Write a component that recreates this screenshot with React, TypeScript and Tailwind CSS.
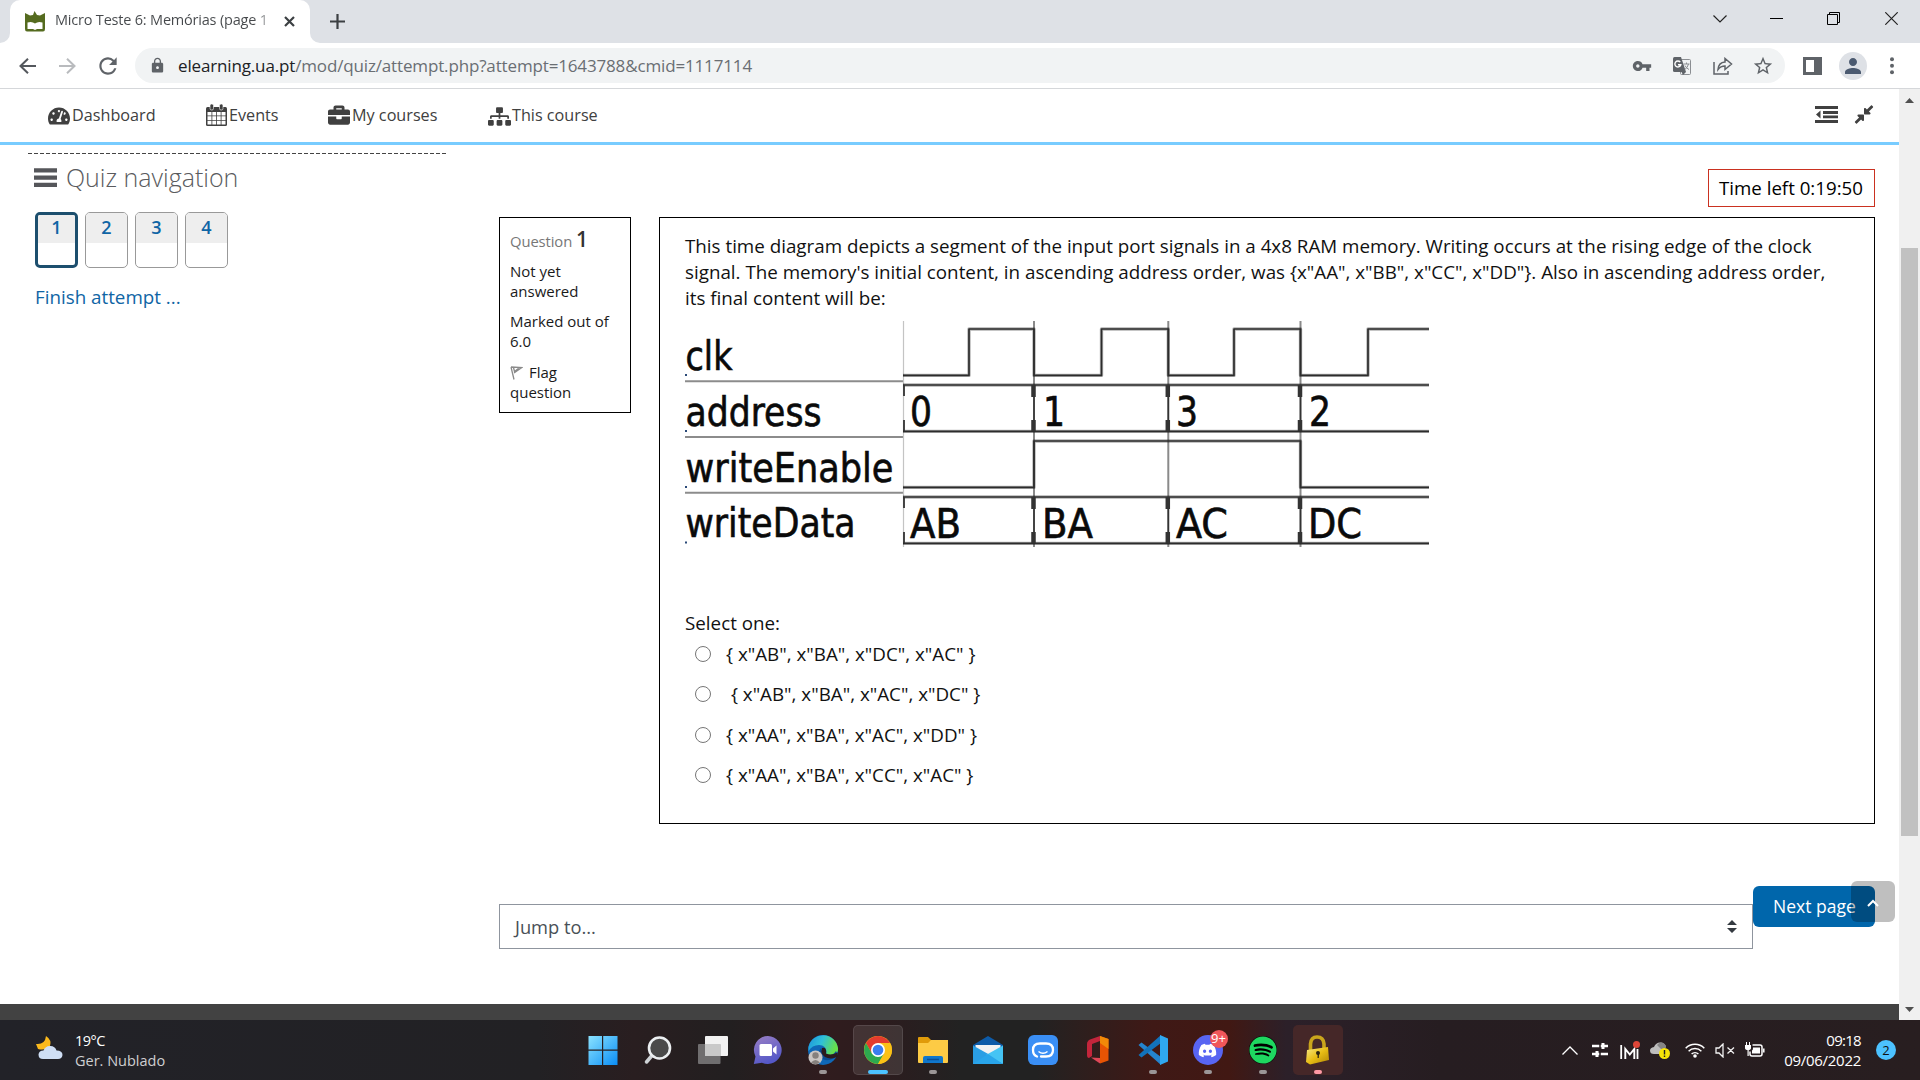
import React from "react";
import {
  FaTachometerAlt,
  FaBriefcase,
  FaSitemap,
  FaCompressAlt,
  FaDiscord,
  FaSpotify,
} from "react-icons/fa";
import { MdVpnKey, MdStarBorder, MdLock, MdPerson, MdRefresh } from "react-icons/md";

function Tab() {
  return (
    <div className="relative flex h-[43px] w-[300px] ml-[10px] items-start rounded-t-[10px] bg-white">
      <svg className="absolute -left-[10px] bottom-0" width="10" height="10"><path d="M10 0V10H0A10 10 0 0 0 10 0Z" fill="#fff" /></svg>
      <svg className="absolute -right-[10px] bottom-0" width="10" height="10"><path d="M0 0V10H10A10 10 0 0 1 0 0Z" fill="#fff" /></svg>
      <svg className="ml-[15px] mt-[11px] shrink-0" width="20" height="21" viewBox="0 0 20 21">
        <path d="M0 2L5 4.500L8 4L9.500 0L12 4L15 4.500L20 2V18Q20 20.500 18 20.500H2Q0 20.500 0 18Z" fill="#556b1f" />
        <path d="M2.500 11.500Q7 10 10 12.500Q13 10 17.500 11.500V18H12L10 19L8 18H2.500Z" fill="#fff" />
      </svg>
      <div className="ml-[10px] mt-[8px] w-[218px] shrink-0 whitespace-nowrap bg-gradient-to-r from-[#45484b] from-[91%] to-[#45484b]/20 bg-clip-text text-[14.500px] leading-[24px] tracking-[-0.200px] text-transparent">
        Micro Teste 6: Memórias (page 1
      </div>
      <svg className="ml-[11px] mt-[16px] shrink-0" width="11" height="11" viewBox="0 0 11 11"><path d="M1 1L10 10M10 1L1 10" stroke="#3c4043" strokeWidth="2.200" /></svg>
    </div>
  );
}

function TabStrip() {
  return (
    <div className="flex h-[43px] shrink-0 bg-[#dee1e6]">
      <Tab />
      <svg className="ml-[20px] mt-[14px]" width="15" height="15" viewBox="0 0 15 15"><path d="M7.500 0V15M0 7.500H15" stroke="#3c4043" strokeWidth="2.200" /></svg>
      <div className="ml-auto mr-[22px] flex h-[37px] items-center">
        <svg width="14" height="8" viewBox="0 0 14 8"><path d="M.5 .5L7 7L13.500 .5" fill="none" stroke="#222" strokeWidth="1.200" /></svg>
        <svg className="ml-[43px]" width="13" height="1"><rect width="13" height="1" fill="#000" /></svg>
        <svg className="ml-[44px]" width="13" height="13" viewBox="0 0 13 13"><path d="M.5 2.500H10.500V12.500H.5ZM2.500 2.500V.5H12.500V10.500H10.500" fill="none" stroke="#000" /></svg>
        <svg className="ml-[45px]" width="13" height="13" viewBox="0 0 13 13"><path d="M.3 .3L12.700 12.700M12.700 .3L.3 12.700" stroke="#222" strokeWidth="1.200" /></svg>
      </div>
    </div>
  );
}

function Toolbar() {
  return (
    <div className="flex h-[46px] shrink-0 items-center border-b border-[#d5d7da] bg-white text-[#5f6368]">
      <svg className="ml-[19px]" width="17" height="16" viewBox="0 0 17 16"><path d="M17 8H2M9 .8L1.500 8L9 15.200" fill="none" stroke="#54585d" strokeWidth="2" /></svg>
      <svg className="ml-[23px]" width="17" height="16" viewBox="0 0 17 16"><path d="M0 8H15M8 .8L15.500 8L8 15.200" fill="none" stroke="#b9bbbe" strokeWidth="2" /></svg>
      <MdRefresh className="ml-[19px] h-[26px] w-[26px] shrink-0" />
      <div className="ml-[14px] flex h-[35px] w-[1650px] items-center rounded-full bg-[#f1f3f4]">
        <MdLock className="ml-[14px] h-[17px] w-[17px]" />
        <div className="ml-[12px] whitespace-nowrap text-[17px] leading-[24px] tracking-[-0.150px] text-[#6a6e73]">
          <span className="text-[#202124]">elearning.ua.pt</span>/mod/quiz/attempt.php?attempt=1643788&amp;cmid=1117114
        </div>
        <div className="ml-auto mr-[11px] flex items-center">
          <MdVpnKey className="h-[20px] w-[20px]" />
          <svg className="ml-[20px]" width="20" height="20" viewBox="0 0 20 20">
            <rect x="8.500" y="3.500" width="10" height="15" rx="1" fill="none" stroke="#8b8e92" />
            <path d="M2.500 1H9L14 16H2.500Q1 16 1 14.500V2.500Q1 1 2.500 1Z" fill="#5f6368" />
            <path d="M8.200 6A3 3 0 1 0 8.800 8.700H6" fill="none" stroke="#fff" strokeWidth="1.400" />
            <path d="M11.500 8H17.500M14.500 6.500V8M16.500 8Q15.500 12 12.800 13.500M13 9.500Q14 12 17 13.500" fill="none" stroke="#8b8e92" />
            <path d="M9.500 16H14L11 19Z" fill="#5f6368" />
          </svg>
          <svg className="ml-[21px]" width="20" height="18" viewBox="0 0 20 18"><path d="M1 5V17H15V14M5 12.500Q5.500 5.500 12 5V1.500L18.500 7L12 12.500V9Q7.500 9 5 12.500Z" fill="none" stroke="#5f6368" strokeWidth="1.500" /></svg>
          <MdStarBorder className="ml-[19px] h-[22px] w-[22px]" />
        </div>
      </div>
      <svg className="ml-[18px]" width="19" height="18"><path d="M0 0H19V18H0ZM3 3V15H11V3Z" fill="#5f6368" fillRule="evenodd" /></svg>
      <div className="ml-[17px] flex h-[28px] w-[28px] items-center justify-center rounded-full bg-[#dee1e6] text-[#4b5a70]"><MdPerson className="h-[24px] w-[24px]" /></div>
      <svg className="ml-[23px]" width="4" height="18"><circle cx="2" cy="2.200" r="2" fill="#5f6368" /><circle cx="2" cy="8.700" r="2" fill="#5f6368" /><circle cx="2" cy="15.200" r="2" fill="#5f6368" /></svg>
    </div>
  );
}

function CalendarIcon() {
  return (
    <svg width="21" height="22" viewBox="0 0 21 22">
      <path d="M1.500 3H19.500Q21 3 21 4.500V20.500Q21 22 19.500 22H1.500Q0 22 0 20.500V4.500Q0 3 1.500 3Z" fill="#404040" />
      <path d="M1.500 8H5.500V11.500H1.500ZM6.300 8H10.100V11.500H6.300ZM10.900 8H14.700V11.500H10.900ZM15.500 8H19.500V11.500H15.500ZM1.500 12.300H5.500V16H1.500ZM6.300 12.300H10.100V16H6.300ZM10.900 12.300H14.700V16H10.900ZM15.500 12.300H19.500V16H15.500ZM1.500 16.800H5.500V20.500H1.500ZM6.300 16.800H10.100V20.500H6.300ZM10.900 16.800H14.700V20.500H10.900ZM15.500 16.800H19.500V20.500H15.500Z" fill="#fff" />
      <rect x="4" y="0" width="3.500" height="6" rx="1.500" fill="#404040" stroke="#fff" strokeWidth=".6" />
      <rect x="13.500" y="0" width="3.500" height="6" rx="1.500" fill="#404040" stroke="#fff" strokeWidth=".6" />
    </svg>
  );
}

function SiteHeader() {
  return (
    <header className="flex h-[56px] shrink-0 border-b-[3px] border-[#78ccff] bg-white text-[16.200px] leading-[24px] text-[#404040]">
      <div className="ml-[48px] mt-[14px] flex h-[24px] w-[158px] items-center"><FaTachometerAlt className="mt-[2px] h-[22px] w-[22px]" /><span className="ml-[2px]">Dashboard</span></div>
      <div className="mt-[14px] flex h-[24px] w-[122px] items-center"><CalendarIcon /><span className="ml-[2px]">Events</span></div>
      <div className="mt-[14px] flex h-[24px] w-[160px] items-center"><FaBriefcase className="h-[22px] w-[22px]" /><span className="ml-[2px]">My courses</span></div>
      <div className="mt-[14px] flex h-[24px] items-center"><FaSitemap className="mt-[2px] h-[23px] w-[23px]" /><span className="ml-[1px]">This course</span></div>
      <svg className="ml-auto mt-[17px]" width="23" height="17" viewBox="0 0 23 17"><path d="M0 0H23V3H0ZM8 5H23V8H8ZM8 9.500H23V12.200H8ZM0 14H23V17H0ZM1 8.500L5.500 4.500V12.500Z" fill="#404040" /></svg>
      <FaCompressAlt className="ml-[16px] mr-[25px] mt-[15px] h-[21px] w-[20px]" />
    </header>
  );
}

const quizButtons = ["1", "2", "3", "4"];

function QuizNav() {
  return (
    <aside className="ml-[28px] mt-[8px] w-[418px] shrink-0">
      <svg className="block" width="418" height="1"><path d="M0 .5H418" stroke="#444" strokeDasharray="4 2" /></svg>
      <div className="ml-[6px] mt-[5px] flex h-[36px] items-center">
        <svg width="23" height="19"><path d="M0 2.300H23M0 9.600H23M0 16.800H23" stroke="#55565a" strokeWidth="4.200" /></svg>
        <h2 className="ml-[9px] text-[25px] font-light leading-[36px] text-[#5a5b5e]">Quiz navigation</h2>
      </div>
      <div className="ml-[7px] mt-[17px] flex gap-[7px]">
        {quizButtons.map((n) => (
          <div
            key={n}
            className={
              n === "1"
                ? "h-[56px] w-[43px] overflow-hidden rounded-[5px] border-[3px] border-[#1d4f6e]"
                : "h-[56px] w-[43px] overflow-hidden rounded-[5px] border border-[#999]"
            }
          >
            <div className={n === "1" ? "h-[28px] bg-[#eee] text-center text-[18px] font-semibold leading-[25px] text-[#0f65a5]" : "h-[30px] bg-[#eee] pt-[2px] text-center text-[18px] font-semibold leading-[25px] text-[#0f65a5]"}>
              {n}
            </div>
          </div>
        ))}
      </div>
      <a className="ml-[7px] mt-[16px] block text-[18.800px] leading-[26px] text-[#0f65a5]">Finish attempt ...</a>
    </aside>
  );
}

const diagramFont = "'DejaVu Sans Condensed', 'DejaVu Sans', sans-serif";

const signals = [
  { name: "clk", y: 370, w: 46 },
  { name: "address", y: 425.700, w: 135 },
  { name: "writeEnable", y: 481.700, w: 207 },
  { name: "writeData", y: 537.400, w: 169 },
];

const cells = [
  { t: "0", x: 910, y: 426, w: 22 },
  { t: "1", x: 1043, y: 426, w: 22 },
  { t: "3", x: 1176, y: 426, w: 22 },
  { t: "2", x: 1309, y: 426, w: 22 },
  { t: "AB", x: 910, y: 538, w: 51 },
  { t: "BA", x: 1042, y: 538, w: 51 },
  { t: "AC", x: 1176, y: 538, w: 52 },
  { t: "DC", x: 1308, y: 538, w: 54 },
];

const wave =
  "M903 375.400H969V329H1034V375.400H1101.500V329H1168.300V375.400H1234V329H1300.500V375.400H1368V329H1429" +
  "M903 385H1429M903 431.400H1429" +
  "M903 487.400H1034V441H1300.500V487.400H1429" +
  "M903 497H1429M903 543.400H1429";

function TimingDiagram() {
  return (
    <svg className="block" width="744" height="228" viewBox="685 320 744 228" fontFamily={diagramFont} fontSize="40.500" fill="#0a0a0a">
      {[381.200, 437, 492.800].map((y) => (
        <path key={y} d={`M685 ${y}H903`} stroke="#8c8c8c" strokeWidth="2" />
      ))}
      {[375, 431, 487, 542.500].map((y) => (
        <rect key={y} x="685" y={y - 1} width="2" height="2" fill="#2b4a78" />
      ))}
      <path d="M903.500 321V547" stroke="#c4c4c4" strokeWidth="1.200" />
      <path d="M1034 321V547M1168.300 321V547M1300.500 321V547" stroke="#8a8a8a" strokeWidth="2" />
      <path d={wave} fill="none" stroke="#000" strokeOpacity=".3" strokeWidth="3.400" strokeLinejoin="round" />
      <path d={wave} fill="none" stroke="#2c2c2c" strokeWidth="1.700" strokeLinejoin="round" />
      {[385, 497].map((y) => (
        <g key={y} stroke="#333" fill="none">
          <path d={`M904 ${y}v11M904 ${y + 35}v11`} strokeWidth="1.800" />
          {[1034, 1168.300, 1300.500].map((x) => (
            <g key={x}>
              <path d={`M${x} ${y}v46`} strokeWidth="1.600" />
              <path d={`M${x - 0.5} ${y}v12M${x - 0.5} ${y + 35}v11`} strokeWidth="4.500" />
            </g>
          ))}
        </g>
      ))}
      <g stroke="#0a0a0a" strokeWidth=".6">
        {signals.map((s) => (
          <text key={s.name} x="685.500" y={s.y} textLength={s.w + 1} lengthAdjust="spacingAndGlyphs">{s.name}</text>
        ))}
        {cells.map((c) => (
          <text key={c.t} x={c.x} y={c.y} textLength={c.w} lengthAdjust="spacingAndGlyphs">{c.t}</text>
        ))}
      </g>
    </svg>
  );
}

const options = [
  '{ x"AB", x"BA", x"DC", x"AC" }',
  '\u00a0{ x"AB", x"BA", x"AC", x"DC" }',
  '{ x"AA", x"BA", x"AC", x"DD" }',
  '{ x"AA", x"BA", x"CC", x"AC" }',
];

function InfoBox() {
  return (
    <div className="h-[196px] w-[132px] shrink-0 border border-black pl-[10px] text-[15px] leading-[20px] text-[#1a1a1a]">
      <div className="mt-[9px] h-[24px] whitespace-nowrap text-[14.800px] leading-[24px] tracking-[-0.100px] text-[#777]">
        Question <span className="text-[21px] font-semibold text-[#333]">1</span>
      </div>
      <div className="mt-[10px]">Not yet<br />answered</div>
      <div className="mt-[10px]">Marked out of<br />6.0</div>
      <div className="mt-[11px] leading-[20px]">
        <svg className="mr-[6px] inline-block align-[-2px]" width="13" height="14" viewBox="0 0 13 14"><path d="M1 1L4 13.500M1 1L12 1.500L4 7M3.500 1.500L4.500 5.500L9 2" fill="none" stroke="#8a8a8a" strokeWidth="1.300" /></svg>
        Flag<br />question
      </div>
    </div>
  );
}

function Question() {
  return (
    <div className="h-[607px] w-[1216px] shrink-0 border border-black pl-[25px] text-[18.800px] text-[#111]">
      <div className="mt-[15px] whitespace-nowrap leading-[26px]">
        <div>This time diagram depicts a segment of the input port signals in a 4x8 RAM memory. Writing occurs at the rising edge of the clock</div>
        <div>signal. The memory's initial content, in ascending address order, was {'{x"AA", x"BB", x"CC", x"DD"}'}. Also in ascending address order,</div>
        <div>its final content will be:</div>
      </div>
      <div className="mt-[9px]"><TimingDiagram /></div>
      <div className="mt-[62px] leading-[26px]">Select one:</div>
      <div className="mt-[5px]">
        {options.map((o) => (
          <label key={o} className="flex h-[40.400px] items-start whitespace-pre leading-[26px]">
            <span className="ml-[10px] mt-[5px] h-[16px] w-[16px] rounded-full border-[1.500px] border-[#767676]" />
            <span className="ml-[15px]">{o}</span>
          </label>
        ))}
      </div>
    </div>
  );
}

function Page() {
  return (
    <div className="flex min-h-0 w-[1899px] flex-col bg-white">
      <SiteHeader />
      <div className="flex h-[859px] shrink-0">
        <QuizNav />
        <main className="ml-[53px] w-[1376px]">
          <div className="mt-[24px] flex h-[38px] justify-end">
            <div className="w-[167px] whitespace-nowrap border border-[#ca3120] pl-[10px] text-[18.700px] leading-[35px] text-black">Time left 0:19:50</div>
          </div>
          <div className="mt-[10px] flex gap-[28px]">
            <InfoBox />
            <Question />
          </div>
          <div className="mt-[62px] flex">
            <div className="mt-[18px] flex h-[45px] w-[1254px] items-center justify-between border border-[#8f959e] pl-[15px] pr-[15px] text-[18.300px] text-[#495057]">
              <span>Jump to...</span>
              <svg width="10" height="13" viewBox="0 0 10 13"><path d="M0 5L5 0L10 5ZM0 8L5 13L10 8Z" fill="#343a40" /></svg>
            </div>
            <div className="relative h-[41px] w-[122px] whitespace-nowrap rounded-[6px] bg-[#0066ab] pl-[20px] text-[17.500px] leading-[40px] text-white">
              Next page
              <div className="absolute -top-[5px] left-[98px] flex h-[41px] w-[44px] justify-center rounded-[6px] bg-black/25">
                <svg className="mt-[18px]" width="12" height="8" viewBox="0 0 12 8"><path d="M1 7L6 2L11 7" fill="none" stroke="#fff" strokeWidth="2" /></svg>
              </div>
            </div>
          </div>
        </main>
      </div>
      <div className="h-[16px] shrink-0 bg-[#424242]" />
    </div>
  );
}

function Scrollbar() {
  return (
    <div className="flex w-[21px] flex-col items-center bg-[#f0f0f0]">
      <svg className="mt-[9px] shrink-0" width="9" height="5"><path d="M0 5L4.500 0L9 5Z" fill="#505050" /></svg>
      <div className="mt-[145px] h-[588px] w-[17px] bg-[#c1c1c1]" />
      <svg className="mb-[8px] mt-auto shrink-0" width="9" height="5"><path d="M0 0L4.500 5L9 0Z" fill="#505050" /></svg>
    </div>
  );
}

const svg30 = { width: 30, height: 30, viewBox: "0 0 30 30" };

const apps: { id: string; icon: React.ReactNode; mark?: string; box?: string }[] = [
  {
    id: "start",
    icon: (
      <svg {...svg30}>
        <defs><linearGradient id="win" x1="0" y1="0" x2="1" y2="1"><stop offset="0" stopColor="#8be3ff" /><stop offset="1" stopColor="#0a8df5" /></linearGradient></defs>
        <path d="M.5 1H14V14.500H.5ZM15.200 1H29.500V14.500H15.200ZM.5 15.700H14V30H.5ZM15.200 15.700H29.500V30H15.200Z" fill="url(#win)" />
      </svg>
    ),
  },
  {
    id: "search",
    icon: (
      <svg {...svg30}>
        <path d="M9 20.500L3.500 27" stroke="#cfd3d6" strokeWidth="3.500" strokeLinecap="round" />
        <circle cx="16.500" cy="13" r="10.500" fill="#4a4a4a" stroke="#eceff1" strokeWidth="2.600" />
      </svg>
    ),
  },
  {
    id: "tasks",
    icon: (
      <svg {...svg30}>
        <rect x="7" y="1" width="23" height="20" rx="1" fill="#f2f2f2" />
        <rect x="0" y="9" width="22.500" height="20" rx="1" fill="#8a8a8a" fillOpacity=".75" />
        <path d="M7 9H22.500V21H7Z" fill="#c9c9c9" />
      </svg>
    ),
  },
  {
    id: "chat",
    icon: (
      <svg {...svg30}>
        <defs><linearGradient id="chat" x1="0" y1="0" x2=".4" y2="1"><stop offset="0" stopColor="#9a7fc4" /><stop offset="1" stopColor="#5558c8" /></linearGradient></defs>
        <path d="M15 1A14 14 0 1 1 9 27.800L.8 29L2.500 21.500A14 14 0 0 1 15 1Z" fill="url(#chat)" />
        <rect x="6.500" y="9" width="12.500" height="12" rx="1.500" fill="#fff" /><path d="M20 13.500L23.500 10.500V19.500L20 16.500Z" fill="#fff" />
      </svg>
    ),
  },
  {
    id: "edge",
    mark: "s",
    icon: (
      <svg {...svg30}>
        <defs>
          <linearGradient id="e1" x1="0" y1="0" x2="1" y2=".3"><stop offset="0" stopColor="#1c93dc" /><stop offset=".5" stopColor="#2fc0d8" /><stop offset="1" stopColor="#66e04c" /></linearGradient>
        </defs>
        <circle cx="15" cy="15" r="15" fill="#0f68b8" />
        <path d="M.5 12A15 15 0 0 1 30 13C30.500 20 24 22 18 19C19.500 15 17 10 11 10Q4 10 .5 16Z" fill="url(#e1)" />
        <path d="M18 19C16 19.500 12 15 13.500 12.500Q9.500 16 12 21.500Q17 28 26.500 23Q30 18 30 20L28 16Q24 22 18 19Z" fill="#0c4d95" />
        <path d="M14 13Q19 12 18 18.500Q23 21 29.500 17.500L29.800 21.500L27.500 22.500Q22 24.500 17 22Q12 19 14 13Z" fill="#2b1a1d" />
        <circle cx="7.500" cy="22.500" r="7" fill="#c9c5c3" /><circle cx="7.500" cy="20.500" r="3.200" fill="#85807d" /><path d="M3 27.500Q7.500 22.500 12 27.500Q7.500 31 3 27.500Z" fill="#85807d" />
      </svg>
    ),
  },
  {
    id: "chrome",
    mark: "l",
    box: "w",
    icon: (
      <svg {...svg30}>
        <circle cx="15" cy="15" r="14" fill="#fbc116" />
        <path d="M15 15L27.100 8A14 14 0 0 0 2.900 8L8.900 18.500Z" fill="#e33b2e" />
        <path d="M2.900 8A14 14 0 0 0 15 29L21.100 18.500L15 15L8.900 18.500Z" fill="#2da94f" />
        <path d="M15 8H27.100A14 14 0 0 1 15 29L21.100 18.500Z" fill="#fbc116" />
        <circle cx="15" cy="15" r="7" fill="#fff" /><circle cx="15" cy="15" r="5.300" fill="#3a7ef0" />
      </svg>
    ),
  },
  {
    id: "files",
    mark: "s",
    icon: (
      <svg {...svg30}>
        <path d="M0 3Q0 2 1 2H10L13 5V9H0Z" fill="#e09b0a" />
        <path d="M0 8H10L13 5H30V27Q30 28 29 28H1Q0 28 0 27Z" fill="#fdcb45" />
        <path d="M5 28V23Q5 21 7 21H23Q25 21 25 23V28Z" fill="#1077cc" /><path d="M9 24.500H21" stroke="#0a4f96" strokeWidth="1.500" />
      </svg>
    ),
  },
  {
    id: "mail",
    icon: (
      <svg {...svg30}>
        <path d="M0 10L15 1L30 10V14H0Z" fill="#0d5ba8" /><path d="M2.500 10H27.500V22H2.500Z" fill="#f2f2f2" />
        <path d="M0 10.500L17 20L30 29H0Z" fill="#2a9ee4" /><path d="M30 10.500L13 20L30 29Z" fill="#45c4f4" /><path d="M0 29L15 19L30 29Z" fill="#29a5ea" />
      </svg>
    ),
  },
  {
    id: "smile",
    icon: (
      <svg {...svg30}>
        <rect width="30" height="30" rx="6" fill="#3a8ff5" />
        <path d="M9 21.500Q5 20 5 15Q5 8.500 12 8.500H18Q25 8.500 25 15Q25 21.500 18 21.500H13" fill="none" stroke="#fff" strokeWidth="2.300" strokeLinecap="round" />
        <path d="M10.500 16.500Q15 20 19.500 16.500" fill="none" stroke="#fff" strokeWidth="1.500" />
      </svg>
    ),
  },
  {
    id: "office",
    icon: (
      <svg {...svg30}>
        <path d="M17 1L7 4.500Q4 6 4 9V20Q4 23 6 23L9 21V9L17 6Z" fill="#c3253b" />
        <path d="M17 1L25.500 4V25.500L17 28.500Z" fill="#e85404" /><path d="M17 23L8 22.500L17 28.500Z" fill="#e04858" /><path d="M17 1L25.500 4V14L17 8Z" fill="#f28a08" />
      </svg>
    ),
  },
  {
    id: "code",
    mark: "s",
    icon: (
      <svg {...svg30}>
        <path d="M.5 10L3.500 7.500L23 22V30Z" fill="#2484cf" /><path d="M.5 20L3.500 22.500L23 8V0Z" fill="#1272bb" />
        <path d="M22 0L30 3.500V26.500L22 30Z" fill="#2fa8f0" />
      </svg>
    ),
  },
  {
    id: "discord",
    mark: "s",
    icon: (
      <div className="relative flex h-[30px] w-[30px] items-center justify-center rounded-full bg-[#5865f2] text-white">
        <FaDiscord className="h-[19px] w-[19px]" />
        <span className="absolute -right-[5px] -top-[5px] h-[18px] w-[18px] rounded-full bg-[#f0565a] text-center text-[13px] leading-[17px]">9+</span>
      </div>
    ),
  },
  {
    id: "spotify",
    mark: "s",
    icon: <div className="flex h-[28px] w-[28px] items-center justify-center rounded-full bg-black"><FaSpotify className="h-[28px] w-[28px] text-[#1ed760]" /></div>,
  },
  {
    id: "lock",
    mark: "p",
    box: "r",
    icon: (
      <svg {...svg30}>
        <defs><linearGradient id="lk" x1="0" y1="0" x2="1" y2="1"><stop offset="0" stopColor="#f7e98a" /><stop offset=".5" stopColor="#e8bd14" /><stop offset="1" stopColor="#b08405" /></linearGradient></defs>
        <path d="M7.500 15V9Q8 2 14 2Q20.500 2 21 9V14" fill="none" stroke="#caa51c" strokeWidth="3.600" />
        <path d="M4 15L25 12L26 25L7 29.500L3 27Z" fill="url(#lk)" />
        <circle cx="15" cy="18" r="2" fill="#2b2412" /><path d="M14.500 18H16L15.800 23H14.600Z" fill="#2b2412" />
      </svg>
    ),
  },
];

const boxClass: Record<string, string> = {
  w: "relative flex h-[50px] w-[50px] items-center justify-center rounded-[5px] border border-white/10 bg-white/10",
  r: "relative flex h-[50px] w-[50px] items-center justify-center rounded-[5px] bg-[#452728]",
  none: "relative flex h-[50px] w-[50px] items-center justify-center",
};
const markClass: Record<string, string> = {
  s: "absolute bottom-[1px] h-[4px] w-[8px] rounded-full bg-[#9b9697]",
  l: "absolute bottom-0 h-[4px] w-[20px] rounded-full bg-[#4cc2ff]",
  p: "absolute bottom-[1px] h-[4px] w-[8px] rounded-full bg-[#ff99a4]",
};

function Tray() {
  return (
    <div className="ml-auto flex items-center">
      <svg width="16" height="9" viewBox="0 0 16 9"><path d="M.5 8.500L8 1L15.500 8.500" fill="none" stroke="#fff" strokeWidth="1.300" /></svg>
      <svg className="ml-[13px]" width="18" height="16" viewBox="0 0 18 16"><path d="M1 4H17M1 12H17" stroke="#fff" strokeWidth="2.500" /><path d="M12 1V7M6 9V15" stroke="#fff" strokeWidth="3" /><path d="M9 2V6M9 10V14" stroke="#261d20" strokeWidth="1.500" /></svg>
      <svg className="ml-[11px]" width="20" height="18" viewBox="0 0 20 18"><path d="M1.200 4V18M17.500 8V18" fill="none" stroke="#fff" strokeWidth="1.800" /><path d="M5.300 18V8L9.800 13.500L14.300 8V18" fill="none" stroke="#fff" strokeWidth="1.900" /><circle cx="16.500" cy="3.500" r="3.500" fill="#dd4638" /></svg>
      <svg className="ml-[10px]" width="21" height="19" viewBox="0 0 21 19"><path d="M4 13Q0 13 0 9.500Q0 6.500 4 6Q6 1 11 1.500Q15 2 16 6L10 13Z" fill="#bdbdbd" /><path d="M7 4Q9 1 12 1.500Q16 3 16 6L12 9Z" fill="#858585" /><circle cx="14.500" cy="12.500" r="5.500" fill="#f8e408" /><path d="M14.500 9V13.500M14.500 14.500V16" stroke="#222" strokeWidth="1.400" /></svg>
      <svg className="ml-[14px]" width="20" height="16" viewBox="0 0 20 16"><path d="M.7 6.200A13 13 0 0 1 19.300 6.200M3.600 9.200A9 9 0 0 1 16.400 9.200M6.600 12A5 5 0 0 1 13.400 12" fill="none" stroke="#fff" strokeWidth="1.500" /><circle cx="10" cy="14" r="1.800" fill="#fff" /></svg>
      <svg className="ml-[10px]" width="20" height="15" viewBox="0 0 20 15"><path d="M1 5H4L8 1V14L4 10H1ZM12.500 4.500L19 10.500M19 4.500L12.500 10.500" fill="none" stroke="#f2f2f2" strokeWidth="1.300" /></svg>
      <svg className="ml-[10px]" width="20" height="16" viewBox="0 0 20 16"><path d="M0 3H6V6Q6 8 3 8Q0 8 0 6ZM1 0H2V3H1ZM4 0H5V3H4ZM2.500 8H3.700V14H2.500Z" fill="#fff" /><path d="M7.500 3H15Q17 3 17 5V12Q17 14 15 14H7Q5 14 5 12V9.500M18.800 6.500V10.500" fill="none" stroke="#fff" strokeWidth="1.500" /><path d="M8 5.500H15V11.500H7V8.500Q8 8 8 6Z" fill="#fff" /></svg>
      <div className="ml-[16px] w-[80px] whitespace-nowrap text-right text-[15px] leading-[20px] text-white"><div className="tracking-[-0.700px]">09:18</div><div className="tracking-[-0.280px]">09/06/2022</div></div>
      <div className="ml-[15px] mr-[24px] h-[20px] w-[20px] rounded-full bg-[#4cc2ff] text-center text-[13px] leading-[20px] text-[#111]">2</div>
    </div>
  );
}

function Taskbar() {
  return (
    <div className="flex h-[60px] shrink-0 items-center bg-[linear-gradient(90deg,#222228_0%,#222124_28%,#291e20_33%,#221f20_38%,#301c1e_43%,#2c1c1e_46%,#222_50%,#222_54%,#3f1916_60%,#411813_64%,#2c2029_67%,#261d21_75%,#281e20_100%)]">
      <div className="flex w-[575px] items-center">
        <svg className="ml-[36px] -mt-[5px]" width="27" height="25" viewBox="0 0 27 25"><path d="M10 1Q16 5 14 11Q9 16 2 14L0 9Q9 10 10 1Z" fill="#fbb91c" /><path d="M7 24Q2.500 24 2.500 19.500Q3 15.500 7.500 15.500Q9.500 10.500 14.500 11Q19 11 20.500 15.500Q26.500 15.500 26.500 20Q26 24 22 24Z" fill="#cfdff5" /></svg>
        <div className="ml-[12px] mt-[2px] text-[14.500px] leading-[20px] text-white"><div className="tracking-[-0.500px]">19°C</div><div className="text-[#cfcfd1]">Ger. Nublado</div></div>
      </div>
      <div className="flex">
        {apps.map((a) => (
          <div key={a.id} className="flex w-[55px] justify-center">
            <div className={boxClass[a.box ?? "none"]}>
              {a.icon}
              {a.mark && <div className={markClass[a.mark]} />}
            </div>
          </div>
        ))}
      </div>
      <Tray />
    </div>
  );
}

export default function App() {
  return (
    <div className="flex h-[1080px] w-[1920px] flex-col overflow-hidden bg-white font-['Open_Sans','Noto_Sans',sans-serif]">
      <TabStrip />
      <Toolbar />
      <div className="flex h-[931px] shrink-0">
        <Page />
        <Scrollbar />
      </div>
      <Taskbar />
    </div>
  );
}
